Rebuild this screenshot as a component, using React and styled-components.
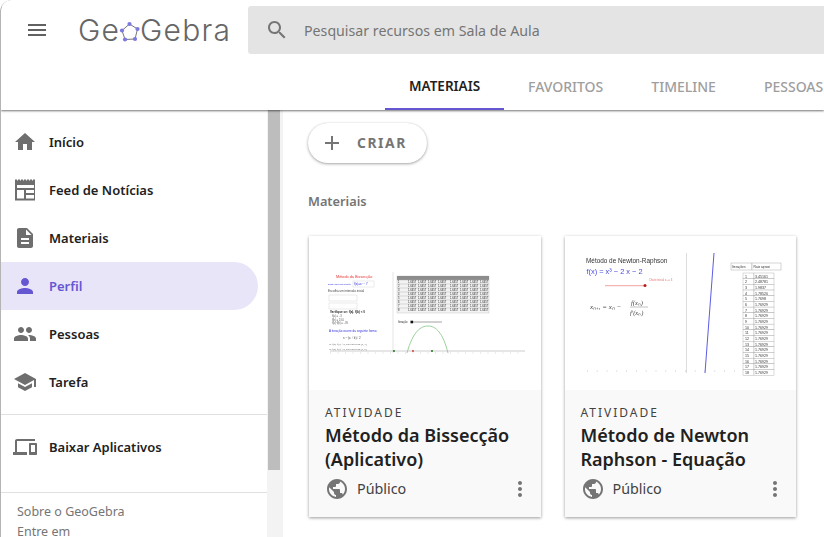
import React from "react";
import styled, { createGlobalStyle } from "styled-components";

const GlobalStyle = createGlobalStyle`
    html, body {
        margin: 0;
        height: 100%;
        overflow: hidden;
        background: #fff;
    }

    * {
        box-sizing: border-box;
    }
`;

const Page = styled.div`
    width: 824px;
    height: 537px;
    display: flex;
    flex-direction: column;
    overflow: hidden;
    border-left: 1px solid #b4b4b4;
    border-top-left-radius: 12px;
    font-family: "Noto Sans", "Open Sans", sans-serif;
    color: #212121;
`;

const Header = styled.header`
    height: 110px;
    flex: none;
    display: flex;
    flex-direction: column;
    box-shadow: 0 1px 2px rgba(0, 0, 0, 0.55);
    z-index: 2;
    background: #fff;
`;

const TopRow = styled.div`
    display: flex;
    align-items: flex-start;
    padding-top: 6px;
    height: 64px;
`;

const MenuButton = styled.div`
    width: 77px;
    height: 48px;
    flex: none;
    display: flex;
    align-items: center;
    padding-left: 24px;
    color: #616161;
`;

const Logo = styled.div`
    width: 170px;
    height: 48px;
    flex: none;
    display: flex;
    align-items: center;
    font-family: "Inter", sans-serif;
    font-weight: 300;
    font-size: 30px;
    letter-spacing: 1.2px;
    color: #666;

    svg {
        flex: none;
        margin: 3px -1px 0 -1px;
    }
`;

const SearchBar = styled.div`
    flex: 1;
    height: 48px;
    display: flex;
    align-items: center;
    gap: 15px;
    padding-left: 17px;
    border-radius: 3px 0 0 3px;
    background: #e4e4e4;
    color: #757575;
    font-size: 14.2px;
`;

const Tabs = styled.nav`
    display: flex;
    height: 46px;
    padding-left: 384px;
`;

const Tab = styled.div`
    flex: none;
    padding: 0 24px;
    display: flex;
    align-items: center;
    font-size: ${(props) => (props.$active ? "13.5px" : "14px")};
    font-weight: ${(props) => (props.$active ? 600 : 500)};
    color: ${(props) => (props.$active ? "#212121" : "#9e9e9e")};
    border-bottom: 2px solid ${(props) => (props.$active ? "#6557d2" : "transparent")};
`;

const Body = styled.div`
    flex: 1;
    min-height: 0;
    display: flex;
`;

const Sidebar = styled.aside`
    width: 266px;
    flex: none;
    display: flex;
    flex-direction: column;
    padding-top: 8px;
`;

const NavItem = styled.div`
    width: 257px;
    height: 48px;
    flex: none;
    display: flex;
    align-items: center;
    gap: 12px;
    padding-left: 12px;
    border-radius: 0 24px 24px 0;
    font-size: 13px;
    font-weight: 600;
    background: ${(props) => (props.$active ? "#e9e5f9" : "transparent")};
    color: ${(props) => (props.$active ? "#6557d2" : "#212121")};

    svg {
        color: ${(props) => (props.$active ? "#6557d2" : "#6e6e6e")};
        flex: none;
    }
`;

const Divider = styled.div`
    height: 1px;
    flex: none;
    background: #e0e0e0;
    margin-top: ${(props) => props.$top}px;
`;

const DownloadItem = styled(NavItem)`
    margin-top: 8px;
`;

const FooterLinks = styled.div`
    padding: 9px 0 0 16px;
    font-size: 12.5px;
    line-height: 20px;
    color: #757575;
`;

const ScrollTrack = styled.div`
    width: 16px;
    flex: none;
    background: #f3f3f3;
    padding: 0 3px 0 1px;
`;

const ScrollThumb = styled.div`
    height: 360px;
    background: #bdbdbd;
`;

const Main = styled.main`
    flex: 1;
    min-width: 0;
    padding: 13px 0 0 25px;
    background: #fff;
`;

const CreateButton = styled.div`
    width: 119px;
    height: 40px;
    display: flex;
    align-items: center;
    gap: 13px;
    padding-left: 12px;
    border-radius: 20px;
    background: #fff;
    color: #757575;
    font-size: 13.8px;
    font-weight: 700;
    letter-spacing: 1.6px;
    line-height: 18px;
    box-shadow: 0 1px 3px rgba(0, 0, 0, 0.35), 0 0 1px rgba(0, 0, 0, 0.12);
`;

const SectionTitle = styled.h2`
    margin: 30px 0 0;
    font-size: 12.8px;
    line-height: 16px;
    font-weight: 600;
    color: #757575;
`;

const Cards = styled.div`
    display: flex;
    gap: 24px;
    margin-top: 27px;
    padding-left: 1px;
`;

const Card = styled.article`
    width: 231.5px;
    height: 281px;
    flex: none;
    display: flex;
    flex-direction: column;
    background: #f9f9f9;
    box-shadow: 0 1px 3px rgba(0, 0, 0, 0.4);
`;

const Thumb = styled.div`
    height: 154px;
    flex: none;
    background: #fff;

    svg {
        display: block;
        filter: blur(0.35px);
    }
`;

const CardBody = styled.div`
    flex: 1;
    display: flex;
    flex-direction: column;
    padding: 15px 16px 0;
`;

const Kind = styled.div`
    font-size: 12px;
    line-height: 16px;
    letter-spacing: 2px;
    color: #424242;
`;

const CardTitle = styled.h3`
    margin: 2px 0 0;
    height: 48px;
    font-size: 18px;
    line-height: 24px;
    font-weight: 600;
    color: #212121;
`;

const CardFooter = styled.div`
    display: flex;
    align-items: center;
    gap: 8px;
    height: 30px;
    margin-top: 3px;
    font-size: 14.3px;
    line-height: 18px;
    color: #424242;

    svg {
        color: #757575;
        flex: none;
    }
`;

const More = styled.span`
    margin-left: auto;
    margin-right: -7px;
    display: flex;
`;

const Icon = ({ d, size = 24 }) => (
    <svg width={size} height={size} viewBox="0 0 24 24" fill="currentColor">
        <path d={d} />
    </svg>
);

const paths = {
    menu: "M3 18h18v-2H3v2zm0-5h18v-2H3v2zm0-7v2h18V6H3z",
    search: "M15.5 14h-.79l-.28-.27C15.41 12.59 16 11.11 16 9.5 16 5.91 13.09 3 9.5 3S3 5.91 3 9.5 5.91 16 9.5 16c1.61 0 3.09-.59 4.23-1.57l.27.28v.79l5 4.99L20.49 19l-4.99-5zm-6 0C7.01 14 5 11.99 5 9.5S7.01 5 9.5 5 14 7.01 14 9.5 11.99 14 9.5 14z",
    home: "M10 20v-6h4v6h5v-8h3L12 3 2 12h3v8z",
    doc: "M14 2H6c-1.1 0-1.99.9-1.99 2L4 20c0 1.1.89 2 1.99 2H18c1.1 0 2-.9 2-2V8l-6-6zm2 16H8v-2h8v2zm0-4H8v-2h8v2zm-3-5V3.5L18.5 9H13z",
    person: "M12 12c2.21 0 4-1.79 4-4s-1.79-4-4-4-4 1.79-4 4 1.79 4 4 4zm0 2c-2.67 0-8 1.34-8 4v2h16v-2c0-2.66-5.33-4-8-4z",
    people: "M16 11c1.66 0 2.99-1.34 2.99-3S17.66 5 16 5c-1.66 0-3 1.34-3 3s1.34 3 3 3zm-8 0c1.66 0 2.99-1.34 2.99-3S9.66 5 8 5C6.34 5 5 6.34 5 8s1.34 3 3 3zm0 2c-2.33 0-7 1.17-7 3.5V19h14v-2.5c0-2.33-4.67-3.5-7-3.5zm8 0c-.29 0-.62.02-.97.05 1.16.84 1.97 1.97 1.97 3.45V19h6v-2.5c0-2.33-4.67-3.5-7-3.5z",
    school: "M5 13.18v4L12 21l7-3.82v-4L12 17l-7-3.82zM12 3L1 9l11 6 9-4.91V17h2V9L12 3z",
    devices: "M4 6h18V4H4c-1.1 0-2 .9-2 2v11H0v3h14v-3H4V6zm19 2h-6c-.55 0-1 .45-1 1v10c0 .55.45 1 1 1h6c.55 0 1-.45 1-1V9c0-.55-.45-1-1-1zm-1 9h-4v-7h4v7z",
    globe: "M12 2C6.48 2 2 6.48 2 12s4.48 10 10 10 10-4.48 10-10S17.52 2 12 2zm-1 17.93c-3.95-.49-7-3.85-7-7.93 0-.62.08-1.21.21-1.79L9 15v1c0 1.1.9 2 2 2v1.93zm6.9-2.54c-.26-.81-1-1.39-1.9-1.39h-1v-3c0-.55-.45-1-1-1H8v-2h2c.55 0 1-.45 1-1V7h2c1.1 0 2-.9 2-2v-.41c2.93 1.19 5 4.06 5 7.41 0 2.08-.8 3.97-2.1 5.39z",
    more: "M12 8c1.1 0 2-.9 2-2s-.9-2-2-2-2 .9-2 2 .9 2 2 2zm0 2c-1.1 0-2 .9-2 2s.9 2 2 2 2-.9 2-2-.9-2-2-2zm0 6c-1.1 0-2 .9-2 2s.9 2 2 2 2-.9 2-2-.9-2-2-2z",
    add: "M19 13h-6v6h-2v-6H5v-2h6V5h2v6h6v2z",
    feed: "M2 1.5h2v1h1v-1h2v1h1v-1h2v1h1v-1h2v1h1v-1h2v1h1v-1h2v1h1v-1h2V22.5H2zM4 7v3h17V7zM4 12v8.5h7V12zM13 12v3h8v-3zM13 17v3.5h8V17z",
};

const LogoMark = () => (
    <svg width="22" height="22" viewBox="0 0 22 22">
        <path d="M10.5 3 L18.5 8 L16 18 L6 18.5 L3 9.5 Z" fill="none" stroke="#777" strokeWidth="1" />
        <g fill="#7d78e0">
            <circle cx="10.5" cy="3" r="2.1" />
            <circle cx="18.5" cy="8" r="2.1" />
            <circle cx="16" cy="18" r="2.1" />
            <circle cx="6" cy="18.5" r="2.1" />
            <circle cx="3" cy="9.5" r="2.1" />
        </g>
    </svg>
);

const tableRows = [45, 49, 53, 57, 61, 65, 69, 73];
const tableCols = [93, 103, 113, 123, 133, 145, 155, 165, 175];

const BisectionThumb = () => (
    <svg width="232" height="154" viewBox="4 1 232 154">
        <text x="31" y="42.5" fontSize="3.8" fill="#e53935" fontFamily="Liberation Sans">Método da Bissecção</text>
        <text x="23" y="50" fontSize="2.3" fill="#3333dd" fontFamily="Liberation Sans">Digite aqui sua função</text>
        <rect x="48" y="46" width="21" height="6" fill="#fff" stroke="#ccc" strokeWidth="0.4" />
        <text x="49" y="50" fontSize="3" fill="#3333dd" fontFamily="Liberation Sans">f(x)=x² − 7</text>
        <text x="23" y="57" fontSize="3" fill="#444" fontFamily="Liberation Sans">Escolha um intervalo inicial</text>
        <rect x="24" y="60" width="28" height="6" fill="#fff" stroke="#ccc" strokeWidth="0.4" />
        <rect x="24" y="68" width="28" height="6" fill="#fff" stroke="#ccc" strokeWidth="0.4" />
        <text x="25" y="78" fontSize="3" fill="#222" fontWeight="bold" fontFamily="Liberation Sans">Verifique se: f(a). f(b) &lt; 0</text>
        <text x="27" y="82" fontSize="2.6" fill="#555" fontFamily="Liberation Sans">f(a) = −3</text>
        <text x="27" y="85.5" fontSize="2.6" fill="#555" fontFamily="Liberation Sans">f(b) = 13.0</text>
        <text x="27" y="89" fontSize="2.6" fill="#555" fontFamily="Liberation Sans">f(a)·f(b) = −39</text>
        <text x="24" y="97" fontSize="3" fill="#3333dd" fontFamily="Liberation Sans">A iteração ocorre da seguinte forma:</text>
        <text x="38" y="104" fontSize="3.2" fill="#333" fontFamily="Liberation Serif">x = (a + b) / 2</text>
        <text x="24" y="110" fontSize="2.6" fill="#555" fontFamily="Liberation Serif">Se f(a)·f(x) &lt; 0, para intervalo [a, x]</text>
        <text x="24" y="115" fontSize="2.6" fill="#555" fontFamily="Liberation Serif">Se f(a)·f(x) &gt; 0, para intervalo [x, b]</text>
        <rect x="92" y="41" width="92" height="37" fill="#f3f3f3" stroke="#aaa" strokeWidth="0.3" />
        <rect x="92" y="41" width="92" height="4" fill="#8c8c8c" />
        {tableRows.map((y) => (
            <line key={y} x1="92" x2="184" y1={y} y2={y} stroke="#aaa" strokeWidth="0.4" />
        ))}
        {tableRows.map((y, r) =>
            tableCols.map((x, c) => (
                <text key={`${r}-${c}`} x={x} y={y + 3.3} fontSize="2.7" fill="#222" fontFamily="Liberation Sans">
                    {c === 0 ? r + 1 : "1.6457"}
                </text>
            ))
        )}
        <line x1="88" x2="88" y1="37" y2="118" stroke="#bbb" strokeWidth="0.4" />
        <line x1="25" x2="220" y1="116" y2="116" stroke="#999" strokeWidth="0.5" />
        <line x1="25" x2="220" y1="118" y2="118" stroke="#ccc" strokeWidth="0.8" strokeDasharray="1 6.5" />
        <line x1="107" x2="137" y1="87" y2="87" stroke="#666" strokeWidth="0.6" />
        <rect x="105.5" y="85.7" width="2.6" height="2.6" fill="#111" />
        <text x="93" y="88.2" fontSize="2.6" fill="#222" fontFamily="Liberation Sans">Iteração</text>
        <path d="M102 118 C108 96 116 91 123 91 C131 91 138 98 143 118" fill="none" stroke="#8fcb8f" strokeWidth="0.9" />
        <circle cx="89" cy="116" r="0.9" fill="#0a6b0a" />
        <circle cx="108" cy="116" r="0.9" fill="#d32f2f" />
        <circle cx="127" cy="116" r="0.9" fill="#0a6b0a" />
    </svg>
);

const newtonValues = ["3.45161", "2.48781", "1.9837", "1.78520", "1.7698", "1.76929", "1.76929", "1.76929", "1.76929", "1.76929", "1.76929", "1.76929", "1.76929", "1.76929", "1.76929", "1.76929", "1.76929", "1.76929"];

const NewtonThumb = () => (
    <svg width="232" height="154" viewBox="4 1 232 154">
        <text x="25" y="28" fontSize="6.4" fill="#333" fontFamily="Liberation Sans">Método de Newton-Raphson</text>
        <text x="25.5" y="39" fontSize="7.4" fill="#4a4ae0" fontFamily="Liberation Sans">f(x) = x³ − 2 x − 2</text>
        <line x1="44" x2="84" y1="50.6" y2="50.6" stroke="#f2b4b4" strokeWidth="1.2" />
        <circle cx="84" cy="50.6" r="1.5" fill="#b71c1c" />
        <text x="88" y="45.5" fontSize="2.8" fill="#e57373" fontFamily="Liberation Sans">Chute inicial x₀ = 3</text>
        <text x="29" y="74" fontSize="7" fill="#444" fontFamily="Liberation Serif" fontStyle="italic">xₙ₊₁ = xₙ −</text>
        <text x="70" y="69.5" fontSize="6.4" fill="#444" fontFamily="Liberation Serif" fontStyle="italic">f(xₙ)</text>
        <line x1="69" x2="87" y1="72" y2="72" stroke="#666" strokeWidth="0.4" />
        <text x="69" y="79.5" fontSize="6.4" fill="#444" fontFamily="Liberation Serif" fontStyle="italic">f′(xₙ)</text>
        <line x1="125.5" x2="125.5" y1="18" y2="138" stroke="#bbb" strokeWidth="0.5" />
        <line x1="26" x2="178" y1="136" y2="136" stroke="#bbb" strokeWidth="1" strokeDasharray="0.8 9" />
        <line x1="144" x2="153" y1="138" y2="18" stroke="#4a4ae0" strokeWidth="0.9" />
        <rect x="170" y="28" width="21" height="7" fill="#fff" stroke="#888" strokeWidth="0.35" />
        <rect x="191" y="28" width="29" height="7" fill="#fff" stroke="#888" strokeWidth="0.35" />
        <text x="171" y="33" fontSize="3.3" fill="#333" fontFamily="Liberation Sans">Iterações</text>
        <text x="192.5" y="33" fontSize="3.3" fill="#333" fontFamily="Liberation Sans">Raiz aproxi</text>
        {newtonValues.map((v, i) => (
            <g key={i}>
                <rect x="182" y={38 + i * 5.68} width="11" height="5.68" fill="#fff" stroke="#888" strokeWidth="0.3" />
                <rect x="193" y={38 + i * 5.68} width="20" height="5.68" fill="#fff" stroke="#888" strokeWidth="0.3" />
                <text x="184" y={42.6 + i * 5.68} fontSize="3.6" fill="#333" fontFamily="Liberation Sans">{i + 1}</text>
                <text x="194" y={42.6 + i * 5.68} fontSize="3.6" fill="#333" fontFamily="Liberation Sans">{v}</text>
            </g>
        ))}
    </svg>
);

const navItems = [
    { label: "Início", icon: paths.home },
    { label: "Feed de Notícias", icon: paths.feed },
    { label: "Materiais", icon: paths.doc },
    { label: "Perfil", icon: paths.person, active: true },
    { label: "Pessoas", icon: paths.people },
    { label: "Tarefa", icon: paths.school },
];

const tabs = ["MATERIAIS", "FAVORITOS", "TIMELINE", "PESSOAS"];

const cards = [
    { title: "Método da Bissecção (Aplicativo)", thumb: <BisectionThumb /> },
    { title: "Método de Newton Raphson - Equação", thumb: <NewtonThumb /> },
];

const App = () => {
    return (
        <>
            <GlobalStyle />
            <Page>
                <Header>
                    <TopRow>
                        <MenuButton>
                            <Icon d={paths.menu} />
                        </MenuButton>
                        <Logo>
                            Ge
                            <LogoMark />
                            Gebra
                        </Logo>
                        <SearchBar>
                            <Icon d={paths.search} />
                            Pesquisar recursos em Sala de Aula
                        </SearchBar>
                    </TopRow>
                    <Tabs>
                        {tabs.map((tab, i) => (
                            <Tab key={tab} $active={i === 0}>
                                {tab}
                            </Tab>
                        ))}
                    </Tabs>
                </Header>
                <Body>
                    <Sidebar>
                        {navItems.map((item) => (
                            <NavItem key={item.label} $active={item.active}>
                                <Icon d={item.icon} />
                                {item.label}
                            </NavItem>
                        ))}
                        <Divider $top={8} />
                        <DownloadItem>
                            <Icon d={paths.devices} />
                            Baixar Aplicativos
                        </DownloadItem>
                        <Divider $top={21} />
                        <FooterLinks>
                            Sobre o GeoGebra
                            <br />
                            Entre em
                        </FooterLinks>
                    </Sidebar>
                    <ScrollTrack>
                        <ScrollThumb />
                    </ScrollTrack>
                    <Main>
                        <CreateButton>
                            <Icon d={paths.add} />
                            CRIAR
                        </CreateButton>
                        <SectionTitle>Materiais</SectionTitle>
                        <Cards>
                            {cards.map((card) => (
                                <Card key={card.title}>
                                    <Thumb>{card.thumb}</Thumb>
                                    <CardBody>
                                        <Kind>ATIVIDADE</Kind>
                                        <CardTitle>{card.title}</CardTitle>
                                        <CardFooter>
                                            <Icon d={paths.globe} />
                                            Público
                                            <More>
                                                <Icon d={paths.more} />
                                            </More>
                                        </CardFooter>
                                    </CardBody>
                                </Card>
                            ))}
                        </Cards>
                    </Main>
                </Body>
            </Page>
        </>
    );
};

export default App;
